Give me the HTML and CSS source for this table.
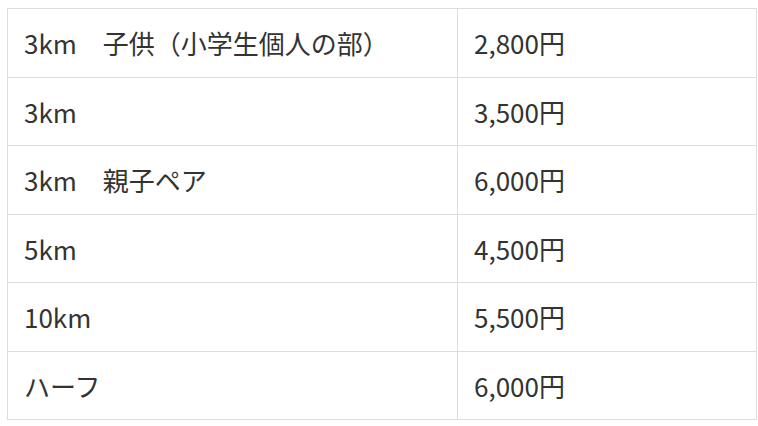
FILE: index.html
```html
<!DOCTYPE html>
<html lang="ja">
<head>
<meta charset="utf-8">
<link rel="stylesheet" href="styles.css">
</head>
<body>
<table class="price-table">
  <tbody>
    <tr><td class="course">3km　子供（小学生個人の部）</td><td class="price">2,800円</td></tr>
    <tr><td class="course">3km</td><td class="price">3,500円</td></tr>
    <tr><td class="course">3km　親子ペア</td><td class="price">6,000円</td></tr>
    <tr><td class="course">5km</td><td class="price">4,500円</td></tr>
    <tr><td class="course">10km</td><td class="price">5,500円</td></tr>
    <tr><td class="course">ハーフ</td><td class="price">6,000円</td></tr>
  </tbody>
</table>
</body>
</html>
```
FILE: styles.css
```css
html, body {
  margin: 0;
  padding: 0;
  background: #fff;
}
body {
  font-family: "Noto Sans CJK JP", "Noto Sans", sans-serif;
  color: #333;
}
.price-table {
  margin: 8px 0 0 7px;
  width: 750px;
  border-collapse: collapse;
  table-layout: fixed;
}
.price-table td {
  border: 1px solid #ddd;
  height: 68.5px;
  padding: 1px 16px 0;
  font-size: 26px;
  line-height: 1.4;
  vertical-align: middle;
  box-sizing: border-box;
}
.price-table .course {
  width: 450px;
}
```
